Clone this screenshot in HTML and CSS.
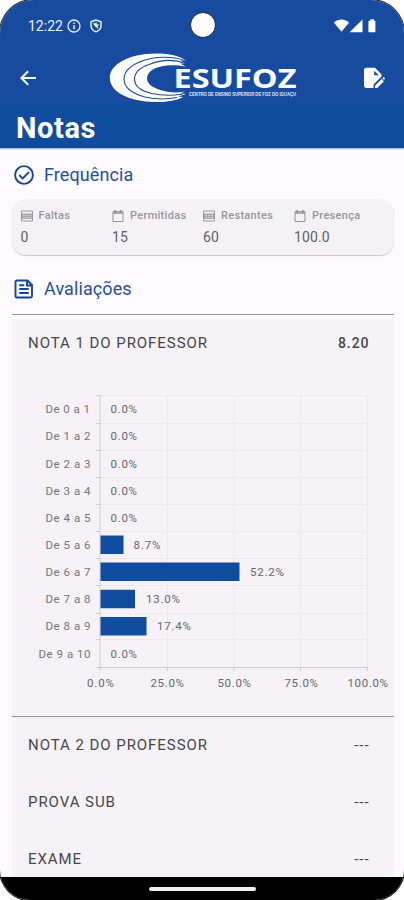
FILE: index.html
```html
<!DOCTYPE html>
<html lang="pt-BR">
<head>
<meta charset="utf-8">
<title>Notas</title>
<link rel="stylesheet" href="styles.css">
</head>
<body>
<div class="phone">
  <header class="header">
    <div class="status">
      <span class="time">12:22</span>
      <svg class="info" width="14" height="14" viewBox="0 0 14 14" fill="none" stroke="#e8eefb" stroke-width="1.3"><circle cx="7" cy="7" r="6"/><path d="M7 6.2v4M7 3.6v1.4" stroke-width="1.5"/></svg>
      <svg class="shield" width="12" height="14" viewBox="0 0 12 14" fill="none" stroke="#e8eefb" stroke-width="1.5"><path d="M6 1 1 2.7v4.1c0 2.800 2.200 5 5 6.100 2.800-1.100 5-3.300 5-6.100V2.700z"/><path d="M3.500 4.300 8 9M6 3.500v3.300l2.600-1"/></svg>
      <svg class="signals" width="45" height="14" viewBox="0 0 45 14" fill="#fff"><path d="M0 3.800C4-.6 11-.6 15 3.800L7.500 12.800z"/><path d="M28.500.5v12.800H15.600z"/><path d="M36.500 1.800V.3h3.600v1.500h.3c.6 0 1 .4 1 1v9.500c0 .6-.4 1-1 1h-5c-.6 0-1-.4-1-1V2.800c0-.6.4-1 1-1z"/></svg>
    </div>
    <div class="toolbar">
      <svg class="back" width="18" height="18" viewBox="0 0 18 18" fill="none" stroke="#f3f6ff" stroke-width="2"><path d="M17 9H3M9.200 2.200 2.400 9l6.800 6.800"/></svg>
      <svg class="logo" width="190" height="54" viewBox="0 0 190 54">
        <path fill="#fff" d="M77 9.500C70 4.500 60 2.300 46 2.500 20 3 .8 13 .8 27S20 50.500 46 51c12 .2 22-1.500 28-5l-5-.5 8-2.500-6-.5 5-2c-8 1.500-16 1.200-23-1-9-2.500-15-6.500-15-12 0-7.500 9-12 20-13 7-.6 13 0 19 1l-6-3 6 0-6-3z"/>
        <g fill="none" stroke="#174b9f" stroke-width="1.100"><path d="M76 9.500C64 5 46 5 33 10c-12 4.500-18 11-18 18 0 8 8 14.500 21 18 10 2.300 22 2.500 32 .5"/><path d="M77 12.500C64 7.500 50 9.500 40 13.500 30 17 25.500 22 25.500 28c0 7 7 12 17 14.500 9 2 20 2.300 31 .8"/></g>
        <text class="logo-name" x="64.500" y="37" textLength="123" lengthAdjust="spacingAndGlyphs">ESUFOZ</text>
        <text class="logo-sub" x="80" y="44.500" textLength="107" lengthAdjust="spacingAndGlyphs">CENTRO DE ENSINO SUPERIOR DE FOZ DO IGUAÇU</text>
      </svg>
      <svg class="edit" width="22" height="22" viewBox="0 0 22 22"><path fill="#fff" d="M3.200.7H12l6.500 6.500v2.300l-8 8V21H3.200C2 21 1 20 1 18.800V2.900C1 1.700 2 .7 3.200.7z"/><path fill="#174b9f" d="M11.200 3.700v4.500h4.500z"/><path fill="#fff" d="M12 18.700 18.600 12l2.300 2.300-6.600 6.700H12zM19.300 11.200l.8-.8c.4-.4.8-.3 1.200 0l.4.500c.3.400.3.800 0 1.200l-.8.800z"/></svg>
    </div>
    <h1>Notas</h1>
  </header>
  <main class="content">
    <h2 class="frequency"><svg width="20" height="20" viewBox="0 0 20 20" fill="none" stroke="#17439a" stroke-width="1.900"><circle cx="10" cy="10" r="8.900"/><path d="m5.200 10 3.500 3.500L15 7.200"/></svg><span>Frequência</span></h2>
    <section class="stats">
      <div><p class="label"><svg width="12" height="12" viewBox="0 0 12 12"><path fill="none" stroke="#9a979d" d="M.5 1h11v10H.5z"/><path fill="#aaa7ad" d="M1 3.500h10V9H1z"/><path stroke="#d3d0d6" d="M2 5.500h8M2 7.500h8" stroke-dasharray="2 1"/></svg>Faltas</p><p class="value">0</p></div>
      <div><p class="label"><svg width="12" height="12" viewBox="0 0 12 12" fill="none" stroke="#96939a"><path d="M1 1.700h10v9.800H1z"/><path d="M1 3h10M3.200 0v2.500M8.800 0v2.500" stroke-width="1.700"/></svg>Permitidas</p><p class="value">15</p></div>
      <div><p class="label"><svg width="12" height="12" viewBox="0 0 12 12"><path fill="none" stroke="#9a979d" d="M.5 1h11v10H.5z"/><path fill="#aaa7ad" d="M1 3.500h10V9H1z"/><path stroke="#d3d0d6" d="M2 5.500h8M2 7.500h8" stroke-dasharray="2 1"/></svg>Restantes</p><p class="value">60</p></div>
      <div><p class="label"><svg width="12" height="12" viewBox="0 0 12 12" fill="none" stroke="#96939a"><path d="M1 1.700h10v9.800H1z"/><path d="M1 3h10M3.200 0v2.500M8.800 0v2.500" stroke-width="1.700"/></svg>Presença</p><p class="value">100.0</p></div>
    </section>
    <h2 class="assessments"><svg width="20" height="20" viewBox="0 0 20 20" fill="none" stroke="#17439a" stroke-width="1.900"><path d="M3 1.500h10.500L18 6v11c0 .8-.6 1.500-1.500 1.500H3c-.8 0-1.500-.6-1.500-1.500V3c0-.8.600-1.500 1.500-1.500z"/><path d="M5.200 6.200h5M5.200 10h9.500M5.200 14h9.500M13 1.500V6.500h5"/></svg><span>Avaliações</span></h2>
    <section class="grades">
      <div class="row first"><span>NOTA 1 DO PROFESSOR</span><b>8.20</b></div>
      <svg class="chart" width="382" height="330" viewBox="12 380 382 330">
        <path class="grid" d="M100 395.500h267.500M100 423.500h267.500M100 450.500h267.500M100 477.500h267.500M100 504.500h267.500M100 531.500h267.500M100 558.500h267.500M100 585.500h267.500M100 613.500h267.500M100 639.500h267.500M167.500 395v272M234 395v272M300.500 395v272M367.500 395v272"/>
        <path class="axis" d="M100 395v276M97 667.500h270.500M96 395.500h4M96 423.500h4M96 450.500h4M96 477.500h4M96 504.500h4M96 531.500h4M96 558.500h4M96 585.500h4M96 613.500h4M96 639.500h4M167.500 667v4M234 667v4M300.500 667v4M367.500 667v4"/>
        <g class="bars"><path d="M100.500 535.500h23v18.500h-23zM100.500 562.500h139v18.500h-139zM100.500 589.800h34.500v18.500h-34.500zM100.500 617h46v18.500h-46z"/></g>
        <g class="names">
          <text x="45.500" y="413" textLength="44.500">De 0 a 1</text><text x="45.500" y="440" textLength="45">De 1 a 2</text><text x="45.500" y="467.500" textLength="45">De 2 a 3</text><text x="45.500" y="494.500" textLength="45">De 3 a 4</text><text x="45.500" y="522" textLength="45">De 4 a 5</text><text x="45.500" y="549" textLength="45">De 5 a 6</text><text x="45.500" y="576" textLength="45">De 6 a 7</text><text x="45.500" y="603" textLength="45">De 7 a 8</text><text x="45.500" y="630" textLength="45">De 8 a 9</text><text x="38.500" y="657.500" textLength="52">De 9 a 10</text>
        </g>
        <g class="amounts">
          <text x="110.500" y="413" textLength="26.500">0.0%</text><text x="110.500" y="440" textLength="26.500">0.0%</text><text x="110.500" y="467.500" textLength="26.500">0.0%</text><text x="110.500" y="494.500" textLength="26.500">0.0%</text><text x="110.500" y="522" textLength="26.500">0.0%</text><text x="133.500" y="549" textLength="27">8.7%</text><text x="250" y="576" textLength="34">52.2%</text><text x="146" y="603" textLength="34">13.0%</text><text x="157" y="630" textLength="34">17.4%</text><text x="110.500" y="657.500" textLength="26.500">0.0%</text>
          <text x="87" y="687" textLength="27">0.0%</text><text x="150.500" y="687" textLength="33.500">25.0%</text><text x="217.500" y="687" textLength="33.500">50.0%</text><text x="284.500" y="687" textLength="33.500">75.0%</text><text x="347.500" y="687" textLength="40.500">100.0%</text>
        </g>
      </svg>
      <div class="row second"><span>NOTA 2 DO PROFESSOR</span><b>---</b></div>
      <div class="row"><span>PROVA SUB</span><b>---</b></div>
      <div class="row"><span>EXAME</span><b>---</b></div>
    </section>
  </main>
  <footer class="navbar"><div class="handle"></div></footer>
  <div class="camera"></div>
</div>
</body>
</html>
```
FILE: styles.css
```css
* { box-sizing: border-box; }
body { margin: 0; background: #fff; font-family: Roboto, "Liberation Sans", sans-serif; }
h1, h2, p { margin: 0; }
svg { display: block; flex: none; }
.phone { position: relative; width: 404px; height: 900px; overflow: hidden; background: #fefbff; border-radius: 33px 33px 30px 30px; box-shadow: 0 0 0 1px #222; display: flex; flex-direction: column; }
.header { height: 150px; flex: none; background: linear-gradient(#174b9f 0 105px, #104d9f 105px 148px, #adbfe2 148px 149px, #e4ecfb 149px); }
.status { height: 50px; padding: 2px 25px 0 28px; display: flex; align-items: center; color: #f1f4ff; }
.time { font-size: 14px; letter-spacing: 0; width: 39px; font-weight: 400; }
.shield { margin-left: 9px; }
.signals { margin-left: auto; }
.toolbar { height: 55px; display: flex; align-items: center; padding: 0 19px; }
.logo { margin-left: 72px; }
.edit { margin-left: auto; }
.logo-name { font: 700 27.500px "Open Sans", sans-serif; fill: #fff; }
.logo-sub { font: 700 6px "Liberation Sans", sans-serif; fill: #e2eafa; }
h1 { color: #fff; font-size: 29px; line-height: 34px; padding: 6px 0 0 16px; letter-spacing: .6px; font-weight: 700; }
.content { flex: 1; min-height: 0; overflow: hidden; padding: 0 10.500px 0 11.500px; }
h2 { display: flex; align-items: center; gap: 10px; padding-left: 2.500px; color: #24509f; font-size: 18px; font-weight: 400; letter-spacing: .1px; }
.frequency { height: 49px; }
.stats { height: 56px; border-radius: 14px; background: #f5f2f7; box-shadow: 0 1px 1px #cbc8cd; display: grid; grid-template-columns: 91.500px 91px 91px 1fr; padding: 10px 0 0 9px; }
.label { display: flex; align-items: center; gap: 6px; height: 13px; font-size: 11px; font-weight: 500; letter-spacing: .3px; color: #98959b; }
.value { height: 18px; margin-top: 6px; font-size: 14px; line-height: 18px; letter-spacing: .1px; color: #626065; }
.assessments { height: 59px; padding-top: 8px; }
.grades { height: 570px; border-top: 1px solid #9d989f; background: linear-gradient(#fefbff 4px, #f6f2f8 4px); }
.row { height: 57px; display: flex; justify-content: space-between; align-items: center; padding: 0 24px 0 16.500px; color: #48464d; font-size: 15px; letter-spacing: .95px; }
.row b { font-weight: 400; }
.first { height: 65px; padding-bottom: 10px; }
.first b { font-weight: 500; font-size: 14px; }
.chart { width: 382px; }
.grid { stroke: #ece8ee; fill: none; }
.axis { stroke: #d0ccd3; fill: none; }
.bars { fill: #104d9f; }
.names, .amounts { font-size: 11.500px; fill: #77747a; }
.amounts { fill: #69666c; }
.second { margin-top: 6px; border-top: 1px solid #97939b; }
.navbar { height: 23px; flex: none; background: #000; display: flex; justify-content: center; padding-top: 10px; border-radius: 0 0 30px 30px; }
.handle { width: 107px; height: 4px; border-radius: 2px; background: #eee; }
.camera { position: absolute; left: 190px; top: 12px; width: 26px; height: 26px; border-radius: 50%; background: #fff; border: 1px solid #222; }
```
